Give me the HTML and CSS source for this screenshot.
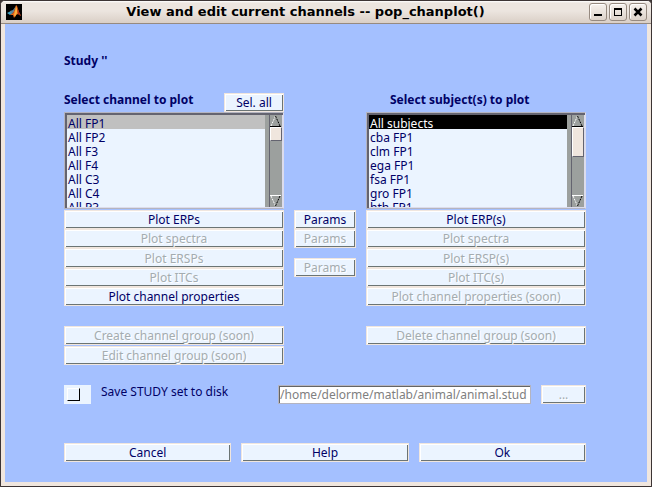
FILE: index.html
```html
<!DOCTYPE html>
<html lang="en">
<head>
<meta charset="utf-8">
<title>View and edit current channels -- pop_chanplot()</title>
<link rel="stylesheet" href="styles.css">
</head>
<body>
<div class="window">
  <header class="titlebar">
    <svg class="logo" viewBox="0 0 16 16" aria-hidden="true">
      <rect width="16" height="16" fill="#000"/>
      <path d="M1 9l4-2 2 2-3 2z" fill="#3f9fc0"/>
      <path d="M4 7l3-1 3-4-2 6-3 2z" fill="#5b8296"/>
      <path d="M4 11l3-2 2-4 1-4 1 1 2 6 2 4-3-2-2 1-2 3-1-3z" fill="#e8641b"/>
      <path d="M10 2l1 3 0 4-2 4-1-2 1-4z" fill="#fbb03b"/>
      <path d="M11 3l2 5 2 4-3-2z" fill="#a82c12"/>
    </svg>
    <h1 class="title">View and edit current channels -- pop_chanplot()</h1>
    <div class="controls">
      <button class="control" type="button" aria-label="Minimize"><svg viewBox="0 0 18 18"><path d="M5 12h8" stroke="#000" stroke-width="2"/></svg></button>
      <button class="control" type="button" aria-label="Maximize"><svg viewBox="0 0 18 18" shape-rendering="crispEdges"><path d="M5 5h8v8h-8zM6 7v5h6v-5z" fill="#000" fill-rule="evenodd"/></svg></button>
      <button class="control" type="button" aria-label="Close"><svg viewBox="0 0 18 18"><path d="M5.500 5.500l7 7M12.500 5.500l-7 7" stroke="#000" stroke-width="2.500"/></svg></button>
    </div>
  </header>
  <main class="content">
    <p class="study">Study ''</p>
    <div class="columns heads">
      <div class="head"><label class="heading" for="channels">Select channel to plot</label><button class="btn selall" type="button">Sel. all</button></div>
      <label class="heading subject" for="subjects">Select subject(s) to plot</label>
    </div>
    <div class="columns">
      <div class="listbox">
        <select class="list" id="channels" size="7">
          <option selected>All FP1</option><option>All FP2</option><option>All F3</option><option>All F4</option><option>All C3</option><option>All C4</option><option>All P3</option>
        </select>
        <div class="scroll" aria-hidden="true">
          <svg class="arrow" viewBox="0 0 11 12"><path d="M1 11L5.500 1" stroke="#fff" stroke-dasharray="2 1"/><path d="M5.500 1L10 11" stroke="#000" stroke-dasharray="2 1"/><path d="M0 11.500h11" stroke="#000"/></svg>
          <div class="thumb"></div>
          <svg class="arrow down" viewBox="0 0 11 12"><path d="M0 .5h11" stroke="#fff"/><path d="M1 1l4.500 10" stroke="#fff" stroke-dasharray="2 1"/><path d="M10 1L5.500 11" stroke="#000" stroke-dasharray="2 1"/></svg>
        </div>
      </div>
      <div class="listbox right">
        <select class="list" id="subjects" size="7">
          <option selected>All subjects</option><option>cba FP1</option><option>clm FP1</option><option>ega FP1</option><option>fsa FP1</option><option>gro FP1</option><option>hth FP1</option>
        </select>
        <div class="scroll" aria-hidden="true">
          <svg class="arrow" viewBox="0 0 11 12"><path d="M1 11L5.500 1" stroke="#fff" stroke-dasharray="2 1"/><path d="M5.500 1L10 11" stroke="#000" stroke-dasharray="2 1"/><path d="M0 11.500h11" stroke="#000"/></svg>
          <div class="thumb tall"></div>
          <svg class="arrow down" viewBox="0 0 11 12"><path d="M0 .5h11" stroke="#fff"/><path d="M1 1l4.500 10" stroke="#fff" stroke-dasharray="2 1"/><path d="M10 1L5.500 11" stroke="#000" stroke-dasharray="2 1"/></svg>
        </div>
      </div>
    </div>
    <div class="columns actions">
      <div class="stack">
        <button class="btn" type="button">Plot ERPs</button>
        <button class="btn" type="button" disabled>Plot spectra</button>
        <button class="btn" type="button" disabled>Plot ERSPs</button>
        <button class="btn" type="button" disabled>Plot ITCs</button>
        <button class="btn" type="button">Plot channel properties</button>
      </div>
      <div class="params">
        <button class="btn" type="button">Params</button>
        <button class="btn" type="button" disabled>Params</button>
        <button class="btn apart" type="button" disabled>Params</button>
      </div>
      <div class="stack">
        <button class="btn" type="button">Plot ERP(s)</button>
        <button class="btn" type="button" disabled>Plot spectra</button>
        <button class="btn" type="button" disabled>Plot ERSP(s)</button>
        <button class="btn" type="button" disabled>Plot ITC(s)</button>
        <button class="btn" type="button" disabled>Plot channel properties (soon)</button>
      </div>
    </div>
    <div class="columns groups">
      <div class="pair">
        <button class="btn" type="button" disabled>Create channel group (soon)</button>
        <button class="btn" type="button" disabled>Edit channel group (soon)</button>
      </div>
      <div class="pair last">
        <button class="btn" type="button" disabled>Delete channel group (soon)</button>
      </div>
    </div>
    <div class="save">
      <span class="tile"><input class="check" type="checkbox" id="save"></span>
      <label class="savelabel" for="save">Save STUDY set to disk</label>
      <input class="path" type="text" aria-label="Study file" value="/home/delorme/matlab/animal/animal.stud" disabled>
      <button class="btn browse" type="button" disabled>...</button>
    </div>
    <div class="footer">
      <button class="btn" type="button">Cancel</button>
      <button class="btn" type="button">Help</button>
      <button class="btn" type="button">Ok</button>
    </div>
  </main>
</div>
</body>
</html>
```
FILE: styles.css
```css
* { box-sizing: border-box; }
body {
  margin: 0;
  background: #3c3434;
  color: #000066;
  font: 12px/14px "Noto Sans", sans-serif;
}
button, input, select { font: inherit; color: inherit; margin: 0; }
.window {
  display: flex;
  flex-direction: column;
  min-height: 100vh;
  border: 1px solid #3c3434;
  border-radius: 5px 5px 0 0;
  background: #f0e6de;
}
.titlebar {
  display: flex;
  align-items: center;
  height: 23px;
  padding: 0 4px 0 5px;
  border-bottom: 1px solid #968a80;
  border-radius: 4px 4px 0 0;
  background: linear-gradient(#fff 0, #ece5df 2px, #ece5df 45%, #dacfc6);
}
.logo { width: 16px; height: 16px; }
.title {
  flex: 1;
  margin: 0;
  text-align: center;
  color: #000;
  font: bold 13px/18px "DejaVu Sans", sans-serif;
}
.controls { display: flex; gap: 2px; }
.control {
  width: 18px;
  height: 18px;
  padding: 0;
  border: 1px solid #968a80;
  border-radius: 3px;
  background: linear-gradient(#f6f1ed, #ddd3ca);
  box-shadow: inset 1px 1px #fff;
}
.control svg { display: block; width: 18px; height: 18px; margin: -1px; }
.content {
  flex: 1;
  margin: 0 4px 4px;
  padding: 30px 61px 20px 59px;
  background: #a4c0ff;
}
.study { margin: 0 0 25px; font-weight: bold; }
.columns {
  display: grid;
  grid-template-columns: 220fr 62fr 220fr;
  column-gap: 10px;
  align-items: start;
}
.heads { height: 19px; }
.head { display: flex; justify-content: space-between; }
.heading { font-weight: bold; }
.subject { grid-column: 3; padding-left: 24px; }
.btn {
  display: block;
  height: 19px;
  min-width: 0;
  padding: 0;
  border: 1px solid #f0e6de;
  background: #ebf4ff;
  box-shadow: inset 1px 1px #fff, inset -1px -1px #6b7474;
  line-height: 17px;
  text-align: center;
  white-space: nowrap;
}
.btn:disabled { color: #a4acb0; text-shadow: 1px 1px #fff; }
.selall { width: 60px; }
.listbox {
  display: flex;
  height: 97px;
  border: 1px solid #b4b4c0;
  border-right-color: #dcdcec;
  border-bottom-color: #b4b4c0;
  box-shadow: inset 2px 2px #646470, inset -1px -1px #dcdcec;
  padding: 2px 1px 1px 2px;
}
.right { grid-column: 3; }
.list {
  flex: 1;
  min-width: 0;
  padding: 0;
  border: 0;
  border-radius: 0;
  outline: 0;
  overflow: hidden;
  background: #ebf4ff;
  appearance: none;
}
.list option { height: 14px; min-height: 14px; padding: 0 1px; line-height: 12px; }
.list option:checked { background: #c0c0c0; color: #000066; }
.right .list option:checked { background: #000; color: #fff; }
.scroll {
  display: flex;
  flex-direction: column;
  width: 17px;
  border-left: 4px solid #9ca09e;
  background: #9ca09e;
  box-shadow: inset 1px 0 #646470;
  padding-left: 1px;
}
.arrow { width: 11px; height: 12px; }
.thumb {
  height: 14px;
  border: 1px solid #fff;
  border-right-color: #646470;
  border-bottom-color: #646470;
  background: #f0e6de;
}
.tall { height: 30px; }
.down { margin-top: auto; }
.actions { margin-top: 1px; }
.stack { display: grid; grid-template-rows: 19px 19px 20px 19px 19px; }
.stack .btn { height: auto; }
.params { display: grid; }
.apart { margin-top: 10px; }
.groups { margin-top: 20px; }
.pair { display: grid; gap: 1px; }
.last { grid-column: 3; }
.save {
  display: flex;
  margin-top: 20px;
  height: 19px;
}
.tile { display: flex; width: 27px; height: 19px; padding: 3px; background: #ebf4ff; }
.check {
  width: 13px;
  height: 13px;
  border: 1px solid #fff;
  border-right-color: #000;
  border-bottom-color: #000;
  background: #ebf4ff;
  appearance: none;
}
.savelabel { flex: 1; padding-left: 10px; white-space: nowrap; }
.path {
  width: 253px;
  padding: 0 1px;
  border: 1px solid #b4b4c0;
  background: #fff;
  box-shadow: inset 1px 1px #646464;
  color: #808080;
}
.browse { width: 45px; margin-left: 10px; }
.footer {
  display: grid;
  grid-template-columns: repeat(3, 1fr);
  gap: 10px;
  margin-top: 39px;
}
```
